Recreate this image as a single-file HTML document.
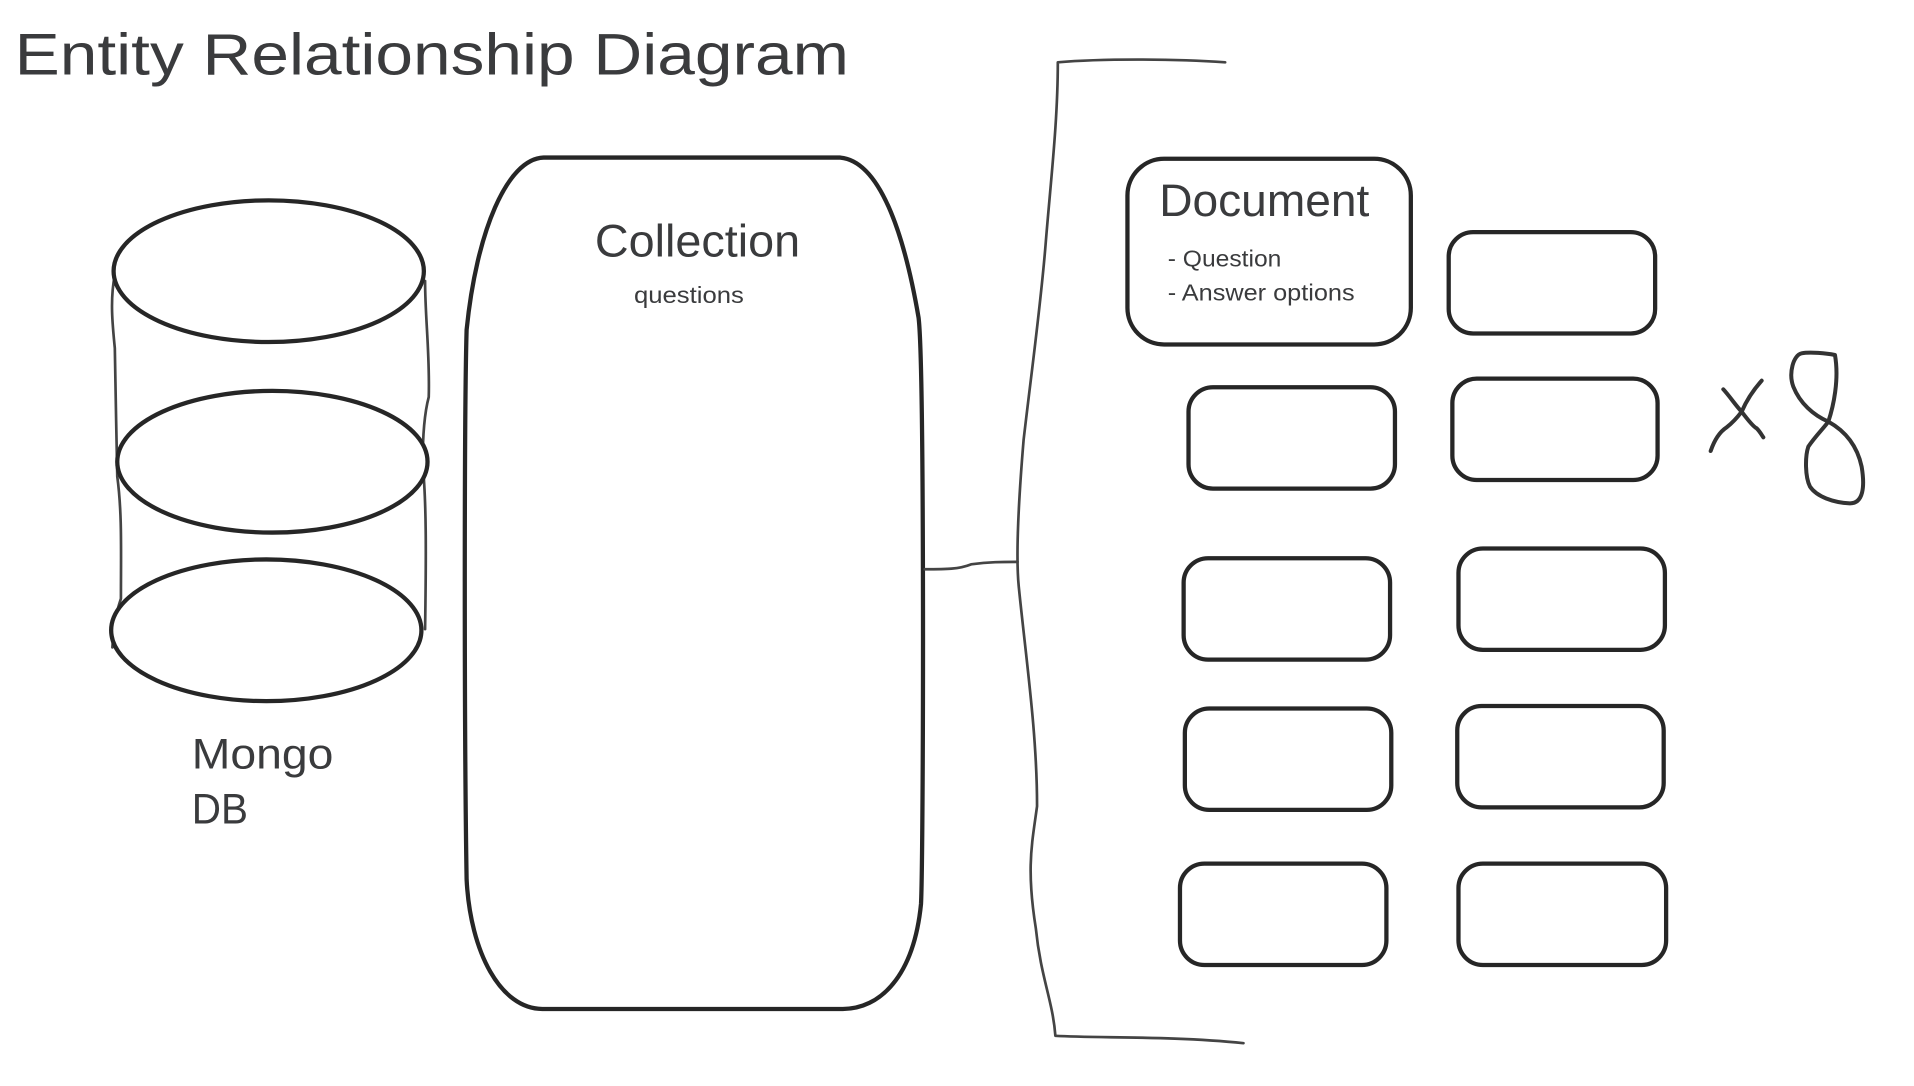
<!DOCTYPE html>
<html><head><meta charset="utf-8"><style>
html,body{margin:0;padding:0;background:#fff;width:1914px;height:1086px;overflow:hidden}
svg{display:block}
text{font-family:"Liberation Sans",sans-serif;fill:#3a3b3d}
</style></head><body>
<svg width="1914" height="1086" viewBox="0 0 1914 1086" xmlns="http://www.w3.org/2000/svg">
<g transform="scale(1.2215)" fill="none" stroke="#262626" stroke-linecap="round" stroke-linejoin="round">
<text x="12" y="61" font-size="48" stroke="none" textLength="683" lengthAdjust="spacingAndGlyphs">Entity Relationship Diagram</text>
<path d="M94,225 C90,245 92,265 94,285 C95,330 95,350 96,390 C100,420 99,450 99,490 C94,505 93,515 92,530" stroke-width="2.2" stroke="#444"/>
<path d="M348,230 C348,260 352,290 351,325 C347,340 346,360 346,380 C349,410 349,450 348,515" stroke-width="2.2" stroke="#444"/>
<ellipse cx="220" cy="222" rx="127" ry="58" stroke-width="3.5" fill="#fff"/>
<ellipse cx="223" cy="378" rx="127" ry="58" stroke-width="3.5" fill="#fff"/>
<ellipse cx="218" cy="516" rx="127" ry="58" stroke-width="3.5" fill="#fff"/>
<text x="157" y="629" font-size="35" stroke="none" textLength="116" lengthAdjust="spacingAndGlyphs">Mongo</text>
<text x="157" y="674" font-size="35" stroke="none" textLength="46" lengthAdjust="spacingAndGlyphs">DB</text>
<path d="M445,129 L688,129 C720,132 740,190 752,260 C757,300 756,700 754,740 C748,800 720,826 690,826 L444,826 C410,826 385,780 382,720 C380,600 380,340 382,270 C390,190 415,130 445,129 Z" stroke-width="3.5"/>
<text x="487" y="210" font-size="37" stroke="none" textLength="168" lengthAdjust="spacingAndGlyphs">Collection</text>
<text x="519" y="248" font-size="19" stroke="none" textLength="90" lengthAdjust="spacingAndGlyphs">questions</text>
<path d="M757,466 C775,466 785,466 795,462 C810,460 820,460 833,460" stroke-width="2.2" stroke="#444"/>
<path d="M1003,51 C960,48 900,48 866,51 C866,100 860,150 856,200 C852,250 845,300 838,360 C833,420 832,460 834,480 C840,540 849,600 849,660 C845,690 840,710 848,760 C852,800 862,820 864,848 C900,850 960,848 1018,854" stroke-width="2.2" stroke="#444"/>
<rect x="923" y="130" width="232" height="152" rx="30" stroke-width="3.5"/>
<text x="949" y="177" font-size="37" stroke="none" textLength="172" lengthAdjust="spacingAndGlyphs">Document</text>
<text x="956" y="218" font-size="19" stroke="none" textLength="93" lengthAdjust="spacingAndGlyphs">- Question</text>
<text x="956" y="246" font-size="19" stroke="none" textLength="153" lengthAdjust="spacingAndGlyphs">- Answer options</text>
<g stroke-width="3.5">
<rect x="1186" y="190" width="169" height="83" rx="20"/>
<rect x="973" y="317" width="169" height="83" rx="20"/>
<rect x="1189" y="310" width="168" height="83" rx="20"/>
<rect x="969" y="457" width="169" height="83" rx="20"/>
<rect x="1194" y="449" width="169" height="83" rx="20"/>
<rect x="970" y="580" width="169" height="83" rx="20"/>
<rect x="1193" y="578" width="169" height="83" rx="20"/>
<rect x="966" y="707" width="169" height="83" rx="20"/>
<rect x="1194" y="707" width="170" height="83" rx="20"/>
</g>
</g>
<g transform="translate(1700,340) scale(0.3333)" fill="none" stroke="#333" stroke-width="12" stroke-linecap="round" stroke-linejoin="round">
<path d="M70,148 C90,170 110,200 125,215 C140,235 160,260 170,265 C180,275 185,285 190,292"/>
<path d="M185,122 C160,150 140,180 125,215 C110,235 95,250 80,262 C60,275 45,295 32,333"/>
<path d="M405,45 C380,40 330,35 305,40 C280,45 265,100 280,140 C300,190 340,225 385,245 C430,270 470,310 485,380 C495,440 490,490 450,490 C400,488 350,470 330,440 C315,410 315,350 325,320 C345,290 375,260 385,245 C400,200 418,120 405,45 Z"/>
</g>
</svg>
</body></html>
